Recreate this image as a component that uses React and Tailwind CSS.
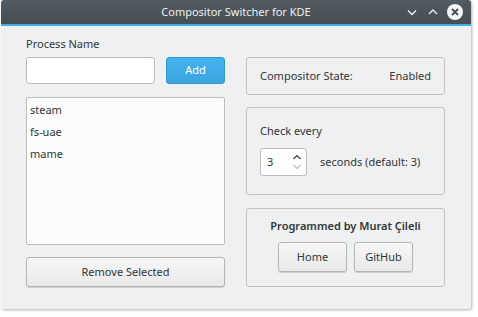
import React from "react";

const font = { fontFamily: '"Noto Sans", "Open Sans", sans-serif' };

const Button = ({ children, className = "" }) => (
    <button className={`border border-[#b4b6b8] rounded-[3px] bg-gradient-to-b from-[#f7f7f7] to-[#e8e9ea] shadow-[0_1px_1px_rgba(0,0,0,0.15)] text-[11px] text-[#31363b] ${className}`}>
        {children}
    </button>
);

const App = () => {
    const processes = ["steam", "fs-uae", "mame"];
    return (
        <div className="w-[478px] h-[317px] bg-white" style={font}>
            <div className="ml-[1px] w-[470px] h-[309px] bg-[#eff0f1] rounded-t-[3px] rounded-b-[2px] shadow-[1px_1px_3px_rgba(0,0,0,0.3)] flex flex-col overflow-hidden">
                <div className="h-[24px] bg-gradient-to-b from-[#525b62] to-[#454d53] relative flex items-center justify-center">
                    <span className="text-[11px] text-[#eff0f1]">Compositor Switcher for KDE</span>
                    <div className="absolute right-[8px] top-0 h-[24px] flex items-center gap-[8px]">
                        <svg width="12" height="12" viewBox="0 0 12 12" className="mr-[1px]">
                            <path d="M2 4.5 L6 8.5 L10 4.5" fill="none" stroke="#eff0f1" strokeWidth="1.3" />
                        </svg>
                        <svg width="12" height="12" viewBox="0 0 12 12">
                            <path d="M2 8 L6 4 L10 8" fill="none" stroke="#eff0f1" strokeWidth="1.3" />
                        </svg>
                        <svg width="16" height="16" viewBox="0 0 16 16">
                            <circle cx="8" cy="8" r="8" fill="#f4f5f5" />
                            <path d="M5 5 L11 11 M11 5 L5 11" stroke="#454d53" strokeWidth="1.8" />
                        </svg>
                    </div>
                </div>
                <div className="h-[2px] bg-[#3daee9]" />
                <div className="flex pl-[25px] gap-[21px] text-[#31363b] text-[11px]">
                    <div className="w-[199px] flex flex-col">
                        <div className="mt-[10px] h-[16px] leading-[16px]">Process Name</div>
                        <div className="mt-[5px] flex justify-between">
                            <input className="w-[129px] h-[27px] bg-white border border-[#bcbec0] rounded-[3px] outline-none px-2" />
                            <button className="w-[59px] h-[27px] rounded-[3px] border border-[#3596cb] bg-gradient-to-b from-[#43b3ee] to-[#3aa5df] text-white text-[11px]">Add</button>
                        </div>
                        <div className="mt-[13px] h-[148px] bg-[#fcfcfc] border border-[#bcbec0] rounded-[2px] pt-[1px] px-[3px]">
                            {processes.map((p) => (
                                <div key={p} className="h-[22px] leading-[22px]">{p}</div>
                            ))}
                        </div>
                        <Button className="mt-[12px] h-[30px] w-[199px]">Remove Selected</Button>
                    </div>
                    <div className="w-[199px] flex flex-col">
                        <div className="mt-[31px] h-[38px] border border-[#c2c4c6] rounded-[3px] flex items-center justify-between px-[13px]">
                            <span>Compositor State:</span>
                            <span>Enabled</span>
                        </div>
                        <div className="mt-[12px] h-[88px] border border-[#c2c4c6] rounded-[3px] px-[13px]">
                            <div className="mt-[15px] h-[16px] leading-[16px]">Check every</div>
                            <div className="mt-[9px] flex items-center">
                                <div className="w-[47px] h-[28px] bg-white border border-[#bcbec0] rounded-[3px] flex items-center justify-between pl-[6px] pr-[4px]">
                                    <span>3</span>
                                    <svg width="10" height="20" viewBox="0 0 10 20">
                                        <path d="M1.5 7 L5 3.5 L8.5 7" fill="none" stroke="#31363b" strokeWidth="1.1" />
                                        <path d="M1.5 13 L5 16.5 L8.5 13" fill="none" stroke="#b8babc" strokeWidth="1.1" />
                                    </svg>
                                </div>
                                <span className="ml-[13px]">seconds (default: 3)</span>
                            </div>
                        </div>
                        <div className="mt-[13px] h-[79px] border border-[#c2c4c6] rounded-[3px] flex flex-col items-center">
                            <div className="mt-[9px] h-[16px] leading-[16px] font-semibold">Programmed by Murat Çileli</div>
                            <div className="mt-[8px] flex gap-[7px]">
                                <Button className="w-[69px] h-[30px]">Home</Button>
                                <Button className="w-[59px] h-[30px]">GitHub</Button>
                            </div>
                        </div>
                    </div>
                </div>
            </div>
        </div>
    );
};

export default App;
